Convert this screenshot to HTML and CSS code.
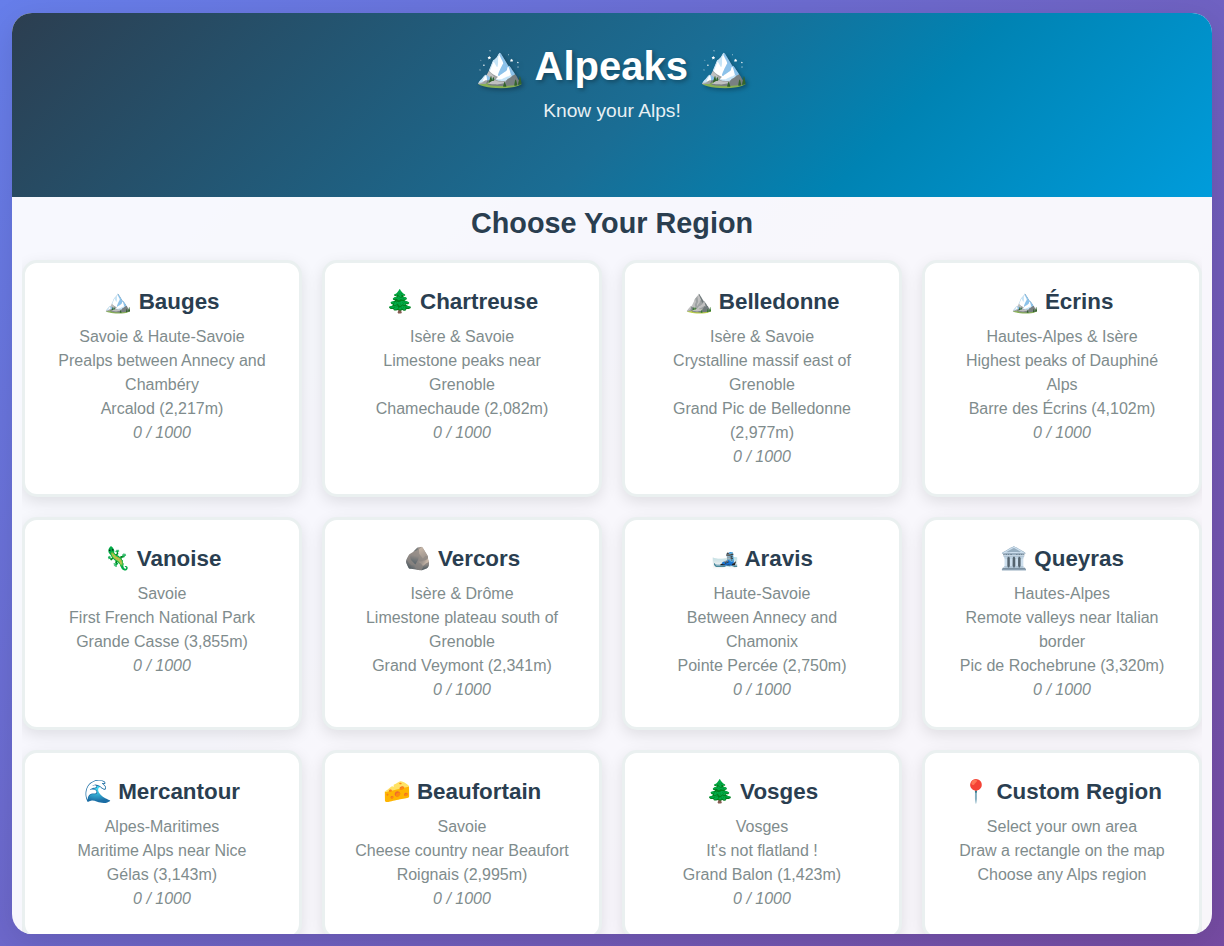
FILE: index.html
```html
<!DOCTYPE html>
<html lang="en">
<head>
<meta charset="UTF-8">
<title>Alpeaks</title>
<link rel="stylesheet" href="styles.css">
</head>
<body>
<div class="container">
  <header class="header">
    <h1>🏔️ Alpeaks 🏔️</h1>
    <p>Know your Alps!</p>
  </header>
  <main class="regions">
    <h2>Choose Your Region</h2>
    <div class="grid">
      <div class="card"><h3>🏔️ Bauges</h3><p>Savoie &amp; Haute-Savoie</p><p>Prealps between Annecy and Chambéry</p><p>Arcalod (2,217m)</p><p class="score">0 / 1000</p></div>
      <div class="card"><h3>🌲 Chartreuse</h3><p>Isère &amp; Savoie</p><p>Limestone peaks near Grenoble</p><p>Chamechaude (2,082m)</p><p class="score">0 / 1000</p></div>
      <div class="card"><h3>⛰️ Belledonne</h3><p>Isère &amp; Savoie</p><p>Crystalline massif east of Grenoble</p><p>Grand Pic de Belledonne (2,977m)</p><p class="score">0 / 1000</p></div>
      <div class="card"><h3>🏔️ Écrins</h3><p>Hautes-Alpes &amp; Isère</p><p>Highest peaks of Dauphiné Alps</p><p>Barre des Écrins (4,102m)</p><p class="score">0 / 1000</p></div>
      <div class="card"><h3>🦎 Vanoise</h3><p>Savoie</p><p>First French National Park</p><p>Grande Casse (3,855m)</p><p class="score">0 / 1000</p></div>
      <div class="card"><h3>🪨 Vercors</h3><p>Isère &amp; Drôme</p><p>Limestone plateau south of Grenoble</p><p>Grand Veymont (2,341m)</p><p class="score">0 / 1000</p></div>
      <div class="card"><h3>🎿 Aravis</h3><p>Haute-Savoie</p><p>Between Annecy and Chamonix</p><p>Pointe Percée (2,750m)</p><p class="score">0 / 1000</p></div>
      <div class="card"><h3>🏛️ Queyras</h3><p>Hautes-Alpes</p><p>Remote valleys near Italian border</p><p>Pic de Rochebrune (3,320m)</p><p class="score">0 / 1000</p></div>
      <div class="card"><h3>🌊 Mercantour</h3><p>Alpes-Maritimes</p><p>Maritime Alps near Nice</p><p>Gélas (3,143m)</p><p class="score">0 / 1000</p></div>
      <div class="card"><h3>🧀 Beaufortain</h3><p>Savoie</p><p>Cheese country near Beaufort</p><p>Roignais (2,995m)</p><p class="score">0 / 1000</p></div>
      <div class="card"><h3>🌲 Vosges</h3><p>Vosges</p><p>It's not flatland !</p><p>Grand Balon (1,423m)</p><p class="score">0 / 1000</p></div>
      <div class="card"><h3>📍 Custom Region</h3><p>Select your own area</p><p>Draw a rectangle on the map</p><p>Choose any Alps region</p></div>
    </div>
  </main>
</div>
</body>
</html>
```
FILE: styles.css
```css
* { margin: 0; padding: 0; box-sizing: border-box; }
body {
  font-family: "Liberation Sans", Arial, sans-serif;
  background: linear-gradient(135deg, #667eea 0%, #764ba2 100%);
  height: 946px;
  padding: 13px 12px 12px;
  overflow: hidden;
}
.container {
  height: 921px;
  border-radius: 20px;
  overflow: hidden;
  background: rgba(255, 255, 255, 0.95);
  box-shadow: 0 8px 32px rgba(0, 0, 0, 0.1);
}
.header {
  height: 184px;
  padding-top: 30px;
  text-align: center;
  color: #fff;
  background: linear-gradient(135deg, #2c3e50 0%, #1a6d94 52%, #0083b3 72%, #009cdb 100%);
}
.header h1 {
  font-size: 40px;
  line-height: 47px;
  margin-bottom: 10px;
  text-shadow: 2px 2px 4px rgba(0, 0, 0, 0.3);
}
.header p { font-size: 19.2px; line-height: 22px; opacity: 0.9; }
.regions {
  margin: 0 10px;
  padding-top: 10px;
  overflow: hidden;
  text-align: center;
}
.regions h2 { font-size: 28.8px; line-height: 33px; color: #2a3e50; margin-bottom: 20px; }
.grid {
  display: grid;
  grid-template-columns: repeat(4, 1fr);
  gap: 20px;
}
.card {
  background: #fff;
  border: 3px solid #eaf0f0;
  border-radius: 15px;
  padding: 25px;
  box-shadow: 0 5px 15px rgba(0, 0, 0, 0.1);
}
.card h3 { font-size: 22.4px; line-height: 27px; color: #2a3e50; margin-bottom: 10px; }
.card p { font-size: 16px; line-height: 24px; color: #7f8c8d; }
.card .score { font-style: italic; }
```
